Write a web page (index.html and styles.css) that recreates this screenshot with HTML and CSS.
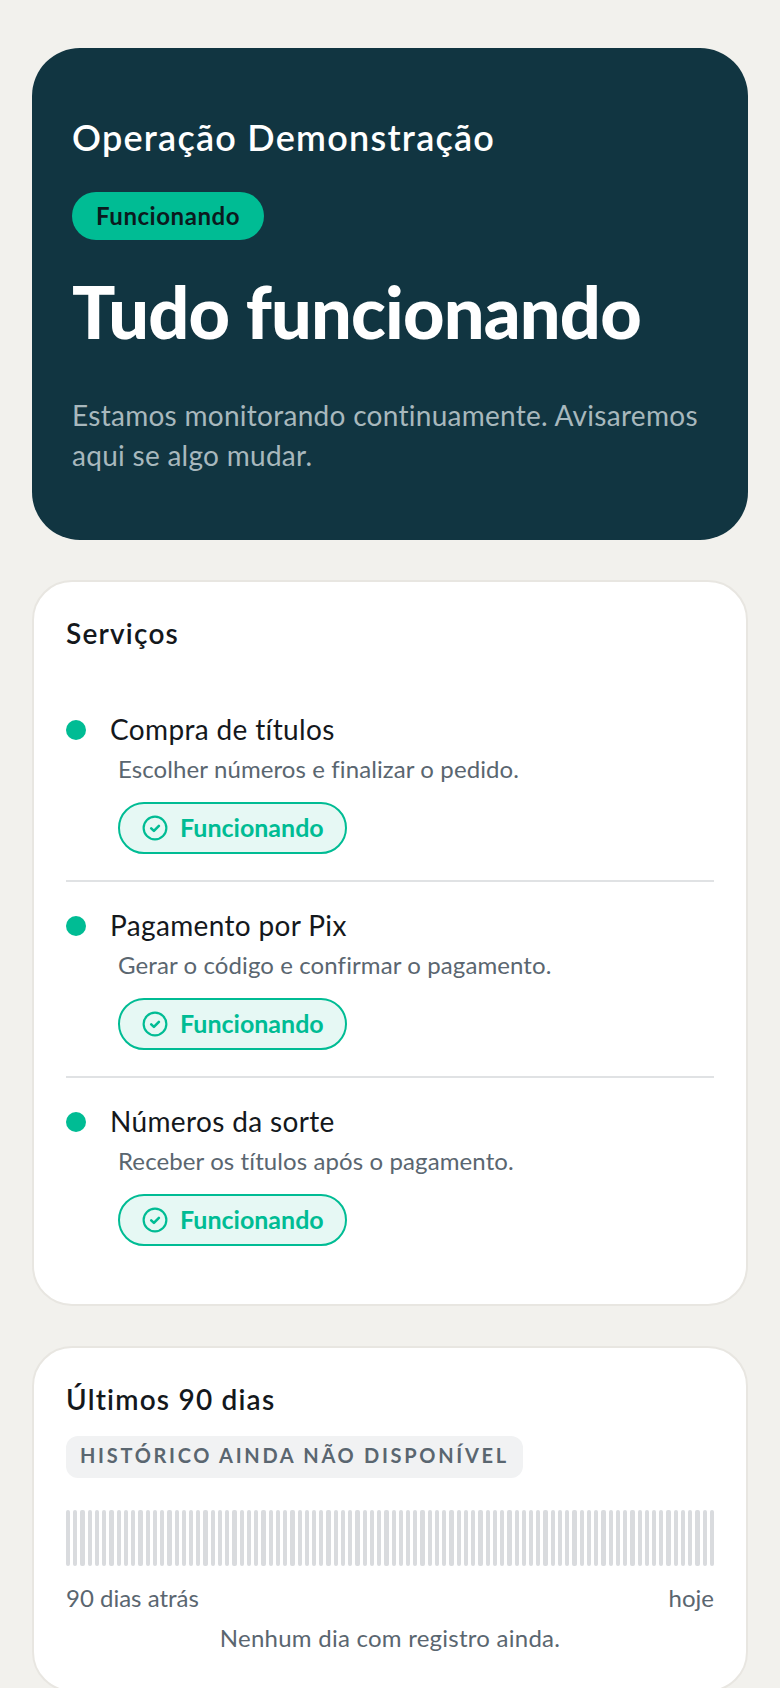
FILE: index.html
```html
<!DOCTYPE html>
<html lang="pt-BR">
<head>
<meta charset="utf-8">
<title>Status</title>
<link rel="stylesheet" href="styles.css">
</head>
<body>
<main class="page">
  <section class="hero">
    <p class="hero-org">Operação Demonstração</p>
    <span class="hero-badge">Funcionando</span>
    <h1 class="hero-title">Tudo funcionando</h1>
    <p class="hero-text">Estamos monitorando continuamente. Avisaremos aqui se algo mudar.</p>
  </section>

  <section class="card">
    <h2 class="card-title">Serviços</h2>
    <ul class="services">
      <li class="service">
        <div class="service-head"><span class="dot"></span><span class="service-name">Compra de títulos</span></div>
        <p class="service-desc">Escolher números e finalizar o pedido.</p>
        <span class="pill"><svg class="pill-icon" viewBox="0 0 24 24"><circle cx="12" cy="12" r="10.5"/><path class="pill-check" d="M8.5 12.3l2.5 2.4 4.6-4.7"/></svg>Funcionando</span>
      </li>
      <li class="service">
        <div class="service-head"><span class="dot"></span><span class="service-name">Pagamento por Pix</span></div>
        <p class="service-desc">Gerar o código e confirmar o pagamento.</p>
        <span class="pill"><svg class="pill-icon" viewBox="0 0 24 24"><circle cx="12" cy="12" r="10.5"/><path class="pill-check" d="M8.5 12.3l2.5 2.4 4.6-4.7"/></svg>Funcionando</span>
      </li>
      <li class="service">
        <div class="service-head"><span class="dot"></span><span class="service-name">Números da sorte</span></div>
        <p class="service-desc">Receber os títulos após o pagamento.</p>
        <span class="pill"><svg class="pill-icon" viewBox="0 0 24 24"><circle cx="12" cy="12" r="10.5"/><path class="pill-check" d="M8.5 12.3l2.5 2.4 4.6-4.7"/></svg>Funcionando</span>
      </li>
    </ul>
  </section>

  <section class="card history">
    <h2 class="card-title">Últimos 90 dias</h2>
    <span class="tag">HISTÓRICO AINDA NÃO DISPONÍVEL</span>
    <div class="bars">
      <i></i><i></i><i></i><i></i><i></i><i></i><i></i><i></i><i></i><i></i>
      <i></i><i></i><i></i><i></i><i></i><i></i><i></i><i></i><i></i><i></i>
      <i></i><i></i><i></i><i></i><i></i><i></i><i></i><i></i><i></i><i></i>
      <i></i><i></i><i></i><i></i><i></i><i></i><i></i><i></i><i></i><i></i>
      <i></i><i></i><i></i><i></i><i></i><i></i><i></i><i></i><i></i><i></i>
      <i></i><i></i><i></i><i></i><i></i><i></i><i></i><i></i><i></i><i></i>
      <i></i><i></i><i></i><i></i><i></i><i></i><i></i><i></i><i></i><i></i>
      <i></i><i></i><i></i><i></i><i></i><i></i><i></i><i></i><i></i><i></i>
      <i></i><i></i><i></i><i></i><i></i><i></i><i></i><i></i><i></i><i></i>
    </div>
    <div class="range"><span>90 dias atrás</span><span>hoje</span></div>
    <p class="empty">Nenhum dia com registro ainda.</p>
  </section>
</main>
</body>
</html>
```

FILE: styles.css
```css
* { box-sizing: border-box; }
html, body { margin: 0; padding: 0; }
body {
  background: #f2f1ed;
  font-family: "Lato", "Noto Sans", sans-serif;
  color: #14181c;
  height: 1688px;
  overflow: hidden;
}
.page {
  padding: 48px 32px 0;
  display: flex;
  flex-direction: column;
  gap: 40px;
}
.hero {
  background: #113541;
  border-radius: 48px;
  padding: 62px 40px 65px;
  color: #fff;
  display: flex;
  flex-direction: column;
  align-items: flex-start;
}
.hero-org {
  margin: 0;
  font-size: 36px;
  line-height: 54px;
  font-weight: 600;
  letter-spacing: 1.25px;
}
.hero-badge {
  margin-top: 28px;
  height: 48px;
  padding: 0 24px;
  border-radius: 24px;
  background: #00bc94;
  color: #0b1a1e;
  font-size: 24px;
  font-weight: 700;
  line-height: 48px;
  letter-spacing: 0.55px;
}
.hero-title {
  margin: 27px 0 0;
  font-size: 72px;
  line-height: 88px;
  font-weight: 900;
  letter-spacing: -0.8px;
}
.hero-text {
  margin: 40px 0 0;
  font-size: 28px;
  line-height: 40px;
  font-weight: 400;
  letter-spacing: 0.28px;
  color: #a8b8bd;
}
.card {
  background: #fff;
  border: 2px solid #e8e6e1;
  border-radius: 40px;
  padding: 32px;
}
.card-title {
  margin: 0;
  font-size: 28px;
  line-height: 38px;
  font-weight: 600;
  letter-spacing: 1.2px;
}
.services {
  list-style: none;
  margin: 34px 0 0;
  padding: 0;
}
.service {
  padding: 25px 0 26px;
  border-bottom: 2px solid #e0e2e4;
}
.service:last-child { border-bottom: 0; }
.service-head {
  display: flex;
  align-items: center;
  gap: 24px;
}
.dot {
  width: 20px;
  height: 20px;
  margin-top: 2px;
  border-radius: 50%;
  background: #00bc94;
}
.service-name {
  font-size: 28px;
  line-height: 36px;
  font-weight: 400;
  letter-spacing: 0.35px;
}
.service-desc {
  margin: 4px 0 15px 52px;
  font-size: 24px;
  line-height: 36px;
  font-weight: 400;
  letter-spacing: 0.1px;
  color: #5a6670;
}
.pill {
  margin-left: 52px;
  display: inline-flex;
  align-items: center;
  vertical-align: top;
  gap: 12px;
  height: 52px;
  padding: 0 21px 2px 22px;
  border: 2px solid #00bc94;
  border-radius: 26px;
  background: #e6f8f4;
  color: #00bc94;
  font-size: 25px;
  font-weight: 700;
}
.pill-icon {
  width: 26px;
  height: 26px;
  margin-top: 2px;
  fill: none;
  stroke: #00bc94;
  stroke-width: 2;
  stroke-linecap: round;
  stroke-linejoin: round;
}
.pill-check { stroke-width: 2.4; }
.tag {
  display: block;
  width: fit-content;
  margin-top: 18px;
  height: 42px;
  padding: 0 14px;
  border-radius: 12px;
  background: #f1f2f3;
  color: #5a6670;
  font-size: 20px;
  line-height: 39px;
  font-weight: 700;
  letter-spacing: 2.7px;
}
.bars {
  display: flex;
  gap: 3px;
  height: 56px;
  margin-top: 32px;
}
.bars i {
  flex: 1;
  background: #d9dbde;
  border-radius: 2px;
}
.range {
  display: flex;
  justify-content: space-between;
  margin-top: 16px;
  font-size: 24px;
  line-height: 32px;
  font-weight: 400;
  color: #5a6670;
}
.empty {
  margin: 4px 0 0;
  text-align: center;
  font-size: 24px;
  line-height: 40px;
  font-weight: 400;
  letter-spacing: 0.25px;
  color: #5a6670;
}
```
